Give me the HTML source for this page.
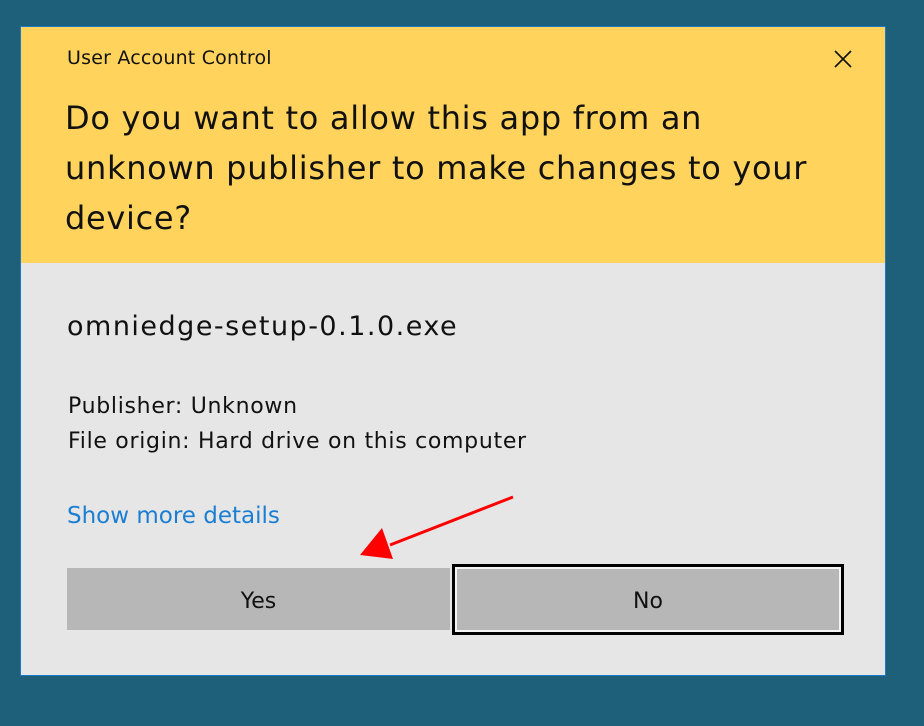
<!DOCTYPE html>
<html><head><style>
body{margin:0;width:924px;height:726px;background:#1e5f7a;position:relative;font-family:"DejaVu Sans","Liberation Sans",sans-serif;overflow:hidden}
.d{position:absolute;left:20px;top:26px;width:864px;height:648px;border:1px solid #1a78c8;background:#e6e6e6}
.y{position:absolute;left:0;top:0;width:864px;height:236px;background:#ffd35c}
.t{position:absolute;color:#111;white-space:nowrap}
</style></head><body>
<div class="d">
<div class="y"></div>
<div class="t" style="left:46px;top:20px;font-size:19px;letter-spacing:0.2px">User Account Control</div>
<svg style="position:absolute;left:812px;top:22px" width="20" height="20"><path d="M2 2L18 18M18 2L2 18" stroke="#111" stroke-width="1.6"/></svg>
<div class="t" style="left:44px;top:66px;font-size:32px;line-height:50px;letter-spacing:0.7px">Do you want to allow this app from an<br>unknown publisher to make changes to your<br>device?</div>
<div class="t" style="left:46px;top:284px;font-size:27px;letter-spacing:1.5px">omniedge-setup-0.1.0.exe</div>
<div class="t" style="left:47px;top:362px;font-size:22px;line-height:35px;letter-spacing:0.7px">Publisher: Unknown<br>File origin: Hard drive on this computer</div>
<div class="t" style="left:46px;top:476px;font-size:23px;color:#1a7fd4">Show more details</div>
<div style="position:absolute;left:46px;top:541px;width:383px;height:62px;background:#b7b7b7;font-size:22px;line-height:68px;text-align:center;color:#111">Yes</div>
<div style="position:absolute;left:431px;top:537px;width:386px;height:65px;border:3px solid #000;background:#b7b7b7;box-shadow:inset 0 0 0 2px #f4f4f4;font-size:22px;line-height:70px;text-align:center;color:#111">No</div>
</div>
<svg style="position:absolute;left:0;top:0" width="924" height="726"><line x1="513" y1="497" x2="390" y2="545" stroke="#f00" stroke-width="3"/><polygon points="360,555 382,528 393,559" fill="#f00"/></svg>
</body></html>
